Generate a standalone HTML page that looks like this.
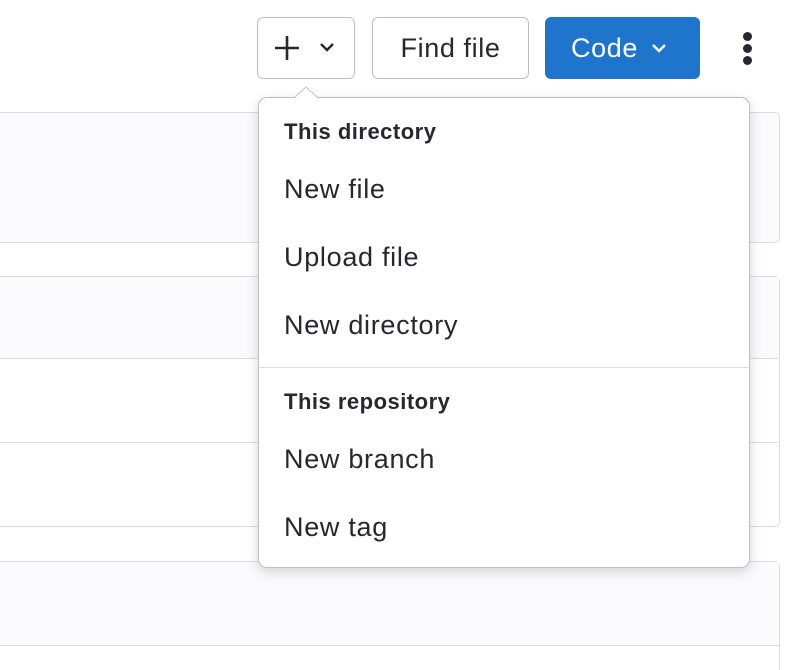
<!DOCTYPE html>
<html><head><style>
html,body{margin:0;width:792px;height:670px;overflow:hidden}
body{background:#fff;font-family:"Liberation Sans",sans-serif;position:relative;color:#28272d}
.box{position:absolute;left:-10px;width:788px;border:1px solid #dcdcde;border-radius:5px;background:#fbfafd}
.line{position:absolute;left:0;width:778px;height:1px;background:#dcdcde}
.btn{position:absolute;top:17px;height:62px;border:1.5px solid #bfbfc3;border-radius:6px;box-sizing:border-box;background:#fff;font-size:27px;letter-spacing:0.6px;display:flex;align-items:center;justify-content:center}
.dd{position:absolute;left:258px;top:97px;width:492px;height:471px;border:1px solid #bfbfc3;border-radius:9px;background:#fff;box-shadow:0 4px 12px rgba(0,0,0,.16);box-sizing:border-box}
.h{position:absolute;left:25px;font-weight:bold;font-size:22px;letter-spacing:0.5px}
.i{position:absolute;left:25px;font-size:27px;letter-spacing:0.7px}
</style></head><body>
<div class="box" style="top:112px;height:129px"></div>
<div class="box" style="top:276px;height:249px;background:#fff"><div style="position:absolute;left:0;top:0;right:0;height:82px;background:#fbfafd"></div></div>
<div class="line" style="top:358px"></div>
<div class="line" style="top:442px"></div>
<div class="box" style="top:561px;height:140px;background:#fff"><div style="position:absolute;left:0;top:0;right:0;height:83px;background:#fbfafd;border-bottom:1px solid #dcdcde"></div></div>

<div class="btn" style="left:257px;width:98px">
<svg width="80" height="40" viewBox="0 0 80 40"><path d="M21 8v24M9 20h24" stroke="#28272d" stroke-width="2.6" fill="none"/><path d="M55 16l6 6 6-6" stroke="#28272d" stroke-width="2.4" fill="none"/></svg></div>
<div class="btn" style="left:372px;width:157px">Find file</div>
<div class="btn" style="left:545px;width:155px;background:#1f75cb;border-color:#1f75cb;color:#fff">Code<svg width="30" height="20" viewBox="0 0 30 20" style="margin-left:6px"><path d="M9 7l6 6 6-6" stroke="#fff" stroke-width="2.4" fill="none"/></svg></div>
<div style="position:absolute;left:743px;top:32px;width:10px">
<div style="width:9px;height:9px;border-radius:50%;background:#28272d;margin-bottom:3px"></div>
<div style="width:9px;height:9px;border-radius:50%;background:#28272d;margin-bottom:3px"></div>
<div style="width:9px;height:9px;border-radius:50%;background:#28272d"></div></div>

<div class="dd">
<div class="h" style="top:21px">This directory</div>
<div class="i" style="top:76px">New file</div>
<div class="i" style="top:144px">Upload file</div>
<div class="i" style="top:212px">New directory</div>
<div style="position:absolute;left:0;right:0;top:269px;height:1px;background:#dcdcde"></div>
<div class="h" style="top:291px">This repository</div>
<div class="i" style="top:346px">New branch</div>
<div class="i" style="top:414px">New tag</div>
</div>
<svg style="position:absolute;left:294px;top:86px" width="26" height="13"><path d="M0 12L12 1 24 12" fill="#fff" stroke="#bfbfc3" stroke-width="1"/></svg>
</body></html>
